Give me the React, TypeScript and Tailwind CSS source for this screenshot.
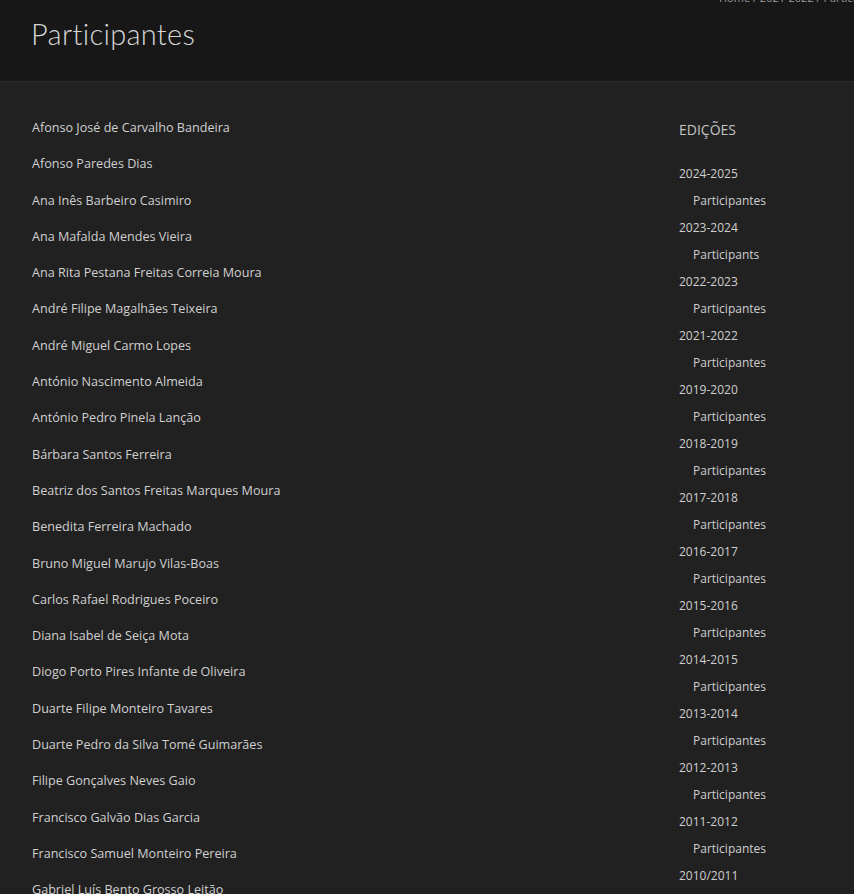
const names = [
  'Afonso José de Carvalho Bandeira',
  'Afonso Paredes Dias',
  'Ana Inês Barbeiro Casimiro',
  'Ana Mafalda Mendes Vieira',
  'Ana Rita Pestana Freitas Correia Moura',
  'André Filipe Magalhães Teixeira',
  'André Miguel Carmo Lopes',
  'António Nascimento Almeida',
  'António Pedro Pinela Lanção',
  'Bárbara Santos Ferreira',
  'Beatriz dos Santos Freitas Marques Moura',
  'Benedita Ferreira Machado',
  'Bruno Miguel Marujo Vilas-Boas',
  'Carlos Rafael Rodrigues Poceiro',
  'Diana Isabel de Seiça Mota',
  'Diogo Porto Pires Infante de Oliveira',
  'Duarte Filipe Monteiro Tavares',
  'Duarte Pedro da Silva Tomé Guimarães',
  'Filipe Gonçalves Neves Gaio',
  'Francisco Galvão Dias Garcia',
  'Francisco Samuel Monteiro Pereira',
  'Gabriel Luís Bento Grosso Leitão',
  'Gonçalo Miguel Pereira Santos',
];

const editions: { year: string; link: string }[] = [
  { year: '2024-2025', link: 'Participantes' },
  { year: '2023-2024', link: 'Participants' },
  { year: '2022-2023', link: 'Participantes' },
  { year: '2021-2022', link: 'Participantes' },
  { year: '2019-2020', link: 'Participantes' },
  { year: '2018-2019', link: 'Participantes' },
  { year: '2017-2018', link: 'Participantes' },
  { year: '2016-2017', link: 'Participantes' },
  { year: '2015-2016', link: 'Participantes' },
  { year: '2014-2015', link: 'Participantes' },
  { year: '2013-2014', link: 'Participantes' },
  { year: '2012-2013', link: 'Participantes' },
  { year: '2011-2012', link: 'Participantes' },
  { year: '2010/2011', link: 'Participantes' },
];

export default function App() {
  return (
    <div className="relative h-[894px] w-[854px] overflow-hidden bg-[#212121] font-['Open_Sans',sans-serif]">
      <header className="relative h-[82px] border-b border-[#2a2a2a] bg-[#171717]">
        <div className="absolute left-[719px] top-[-10px] whitespace-nowrap text-[11px] text-[#9a9a9a]">
          Home / 2021-2022 / Participantes
        </div>
        <h1 className="pl-[31px] pt-[15px] font-['Lato',sans-serif] text-[29px] font-light leading-[38px] tracking-[0.3px] text-[#d6d6d6]">
          Participantes
        </h1>
      </header>

      <div className="flex pt-[36px]">
        <ul className="w-[679px] shrink-0 pl-[32px] pt-[1px]">
          {names.map((n) => (
            <li key={n} className="mb-[18px] text-[12.6px] leading-[18.3px] text-[#d0d0d0]">
              {n}
            </li>
          ))}
        </ul>

        <aside className="flex-1">
          <h3 className="pt-[2px] text-[14px] uppercase leading-[20px] text-[#c4c4c4]">Edições</h3>
          <ul className="mt-[20px] text-[12px] leading-[17px]">
            {editions.map((e) => (
              <li key={e.year}>
                <div className="py-[5px] text-[#cfcfcf]">{e.year}</div>
                <div className="py-[5px] pl-[14px] text-[#cfcfcf]">{e.link}</div>
              </li>
            ))}
          </ul>
        </aside>
      </div>
    </div>
  );
}
